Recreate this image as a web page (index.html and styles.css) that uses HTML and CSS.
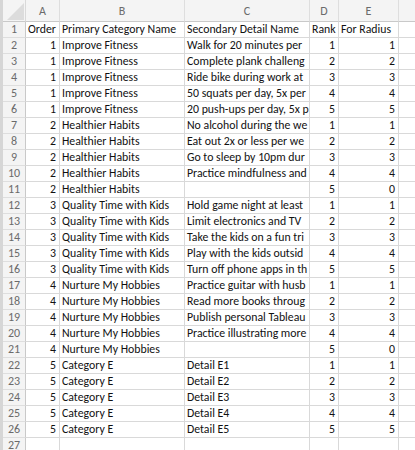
FILE: index.html
```html
<!DOCTYPE html>
<html>
<head>
<meta charset="utf-8">
<link rel="stylesheet" href="styles.css">
</head>
<body>
<div class="sheet">
  <div class="strip hdr-strip"></div>
  <div class="corner"><svg class="tri" width="20" height="20" viewBox="0 0 20 20"><polygon points="19,2 19,19 2,19" fill="#dcdcdc"/></svg></div>
  <div class="colh">A</div>
  <div class="colh">B</div>
  <div class="colh">C</div>
  <div class="colh">D</div>
  <div class="colh">E</div>
  <div class="colh last"></div>

  <div class="strip"></div><div class="rowh">1</div><div class="c">Order</div><div class="c">Primary Category Name</div><div class="c">Secondary Detail Name</div><div class="c">Rank</div><div class="c">For Radius</div><div class="c last"></div>
  <div class="strip"></div><div class="rowh">2</div><div class="c n">1</div><div class="c">Improve Fitness</div><div class="c">Walk for 20 minutes per</div><div class="c n">1</div><div class="c n">1</div><div class="c last"></div>
  <div class="strip"></div><div class="rowh">3</div><div class="c n">1</div><div class="c">Improve Fitness</div><div class="c">Complete plank challeng</div><div class="c n">2</div><div class="c n">2</div><div class="c last"></div>
  <div class="strip"></div><div class="rowh">4</div><div class="c n">1</div><div class="c">Improve Fitness</div><div class="c">Ride bike during work at</div><div class="c n">3</div><div class="c n">3</div><div class="c last"></div>
  <div class="strip"></div><div class="rowh">5</div><div class="c n">1</div><div class="c">Improve Fitness</div><div class="c">50 squats per day, 5x per</div><div class="c n">4</div><div class="c n">4</div><div class="c last"></div>
  <div class="strip"></div><div class="rowh">6</div><div class="c n">1</div><div class="c">Improve Fitness</div><div class="c">20 push-ups per day, 5x p</div><div class="c n">5</div><div class="c n">5</div><div class="c last"></div>
  <div class="strip"></div><div class="rowh">7</div><div class="c n">2</div><div class="c">Healthier Habits</div><div class="c">No alcohol during the we</div><div class="c n">1</div><div class="c n">1</div><div class="c last"></div>
  <div class="strip"></div><div class="rowh">8</div><div class="c n">2</div><div class="c">Healthier Habits</div><div class="c">Eat out 2x or less per we</div><div class="c n">2</div><div class="c n">2</div><div class="c last"></div>
  <div class="strip"></div><div class="rowh">9</div><div class="c n">2</div><div class="c">Healthier Habits</div><div class="c">Go to sleep by 10pm dur</div><div class="c n">3</div><div class="c n">3</div><div class="c last"></div>
  <div class="strip"></div><div class="rowh">10</div><div class="c n">2</div><div class="c">Healthier Habits</div><div class="c">Practice mindfulness and</div><div class="c n">4</div><div class="c n">4</div><div class="c last"></div>
  <div class="strip"></div><div class="rowh">11</div><div class="c n">2</div><div class="c">Healthier Habits</div><div class="c"></div><div class="c n">5</div><div class="c n">0</div><div class="c last"></div>
  <div class="strip"></div><div class="rowh">12</div><div class="c n">3</div><div class="c">Quality Time with Kids</div><div class="c">Hold game night at least</div><div class="c n">1</div><div class="c n">1</div><div class="c last"></div>
  <div class="strip"></div><div class="rowh">13</div><div class="c n">3</div><div class="c">Quality Time with Kids</div><div class="c">Limit electronics and TV</div><div class="c n">2</div><div class="c n">2</div><div class="c last"></div>
  <div class="strip"></div><div class="rowh">14</div><div class="c n">3</div><div class="c">Quality Time with Kids</div><div class="c">Take the kids on a fun tri</div><div class="c n">3</div><div class="c n">3</div><div class="c last"></div>
  <div class="strip"></div><div class="rowh">15</div><div class="c n">3</div><div class="c">Quality Time with Kids</div><div class="c">Play with the kids outsid</div><div class="c n">4</div><div class="c n">4</div><div class="c last"></div>
  <div class="strip"></div><div class="rowh">16</div><div class="c n">3</div><div class="c">Quality Time with Kids</div><div class="c">Turn off phone apps in th</div><div class="c n">5</div><div class="c n">5</div><div class="c last"></div>
  <div class="strip"></div><div class="rowh">17</div><div class="c n">4</div><div class="c">Nurture My Hobbies</div><div class="c">Practice guitar with husb</div><div class="c n">1</div><div class="c n">1</div><div class="c last"></div>
  <div class="strip"></div><div class="rowh">18</div><div class="c n">4</div><div class="c">Nurture My Hobbies</div><div class="c">Read more books throug</div><div class="c n">2</div><div class="c n">2</div><div class="c last"></div>
  <div class="strip"></div><div class="rowh">19</div><div class="c n">4</div><div class="c">Nurture My Hobbies</div><div class="c">Publish personal Tableau</div><div class="c n">3</div><div class="c n">3</div><div class="c last"></div>
  <div class="strip"></div><div class="rowh">20</div><div class="c n">4</div><div class="c">Nurture My Hobbies</div><div class="c">Practice illustrating more</div><div class="c n">4</div><div class="c n">4</div><div class="c last"></div>
  <div class="strip"></div><div class="rowh">21</div><div class="c n">4</div><div class="c">Nurture My Hobbies</div><div class="c"></div><div class="c n">5</div><div class="c n">0</div><div class="c last"></div>
  <div class="strip"></div><div class="rowh">22</div><div class="c n">5</div><div class="c">Category E</div><div class="c">Detail E1</div><div class="c n">1</div><div class="c n">1</div><div class="c last"></div>
  <div class="strip"></div><div class="rowh">23</div><div class="c n">5</div><div class="c">Category E</div><div class="c">Detail E2</div><div class="c n">2</div><div class="c n">2</div><div class="c last"></div>
  <div class="strip"></div><div class="rowh">24</div><div class="c n">5</div><div class="c">Category E</div><div class="c">Detail E3</div><div class="c n">3</div><div class="c n">3</div><div class="c last"></div>
  <div class="strip"></div><div class="rowh">25</div><div class="c n">5</div><div class="c">Category E</div><div class="c">Detail E4</div><div class="c n">4</div><div class="c n">4</div><div class="c last"></div>
  <div class="strip"></div><div class="rowh">26</div><div class="c n">5</div><div class="c">Category E</div><div class="c">Detail E5</div><div class="c n">5</div><div class="c n">5</div><div class="c last"></div>
  <div class="strip"></div><div class="rowh">27</div><div class="c"></div><div class="c"></div><div class="c"></div><div class="c"></div><div class="c"></div><div class="c last"></div>
</div>
</body>
</html>
```
FILE: styles.css
```css
html, body {
  margin: 0;
  padding: 0;
  background: #ffffff;
  overflow: hidden;
}
.sheet {
  display: grid;
  grid-template-columns: 3px 23px 34px 125px 125px 29px 60px 1fr;
  grid-template-rows: 22px;
  grid-auto-rows: 16px;
  width: 415px;
  font-family: Carlito, Lato, "Liberation Sans", sans-serif;
  font-size: 11.8px;
  color: #111111;
}
.strip {
  background: #d6d6d6;
}
.corner {
  background: #f4f4f4;
  border-right: 1px solid #d9d9d9;
  border-bottom: 1px solid #c9c9c9;
  box-sizing: border-box;
  display: flex;
  align-items: flex-end;
  justify-content: flex-end;
}
.tri {
  display: block;
}
.colh {
  background: #f4f4f4;
  border-right: 1px solid #dedede;
  border-bottom: 1px solid #c9c9c9;
  box-sizing: border-box;
  color: #6b6b6b;
  font-size: 12px;
  display: flex;
  align-items: center;
  justify-content: center;
  padding-top: 1px;
}
.rowh {
  background: #f4f4f4;
  border-right: 1px solid #c9c9c9;
  border-bottom: 1px solid #dedede;
  box-sizing: border-box;
  color: #6b6b6b;
  font-size: 12px;
  display: flex;
  align-items: center;
  justify-content: center;
  line-height: 15px;
}
.c {
  border-right: 1px solid #d9d9d9;
  border-bottom: 1px solid #d9d9d9;
  box-sizing: border-box;
  padding: 0 2px 0 2px;
  white-space: nowrap;
  overflow: hidden;
  line-height: 15px;
}
.n {
  text-align: right;
  padding-right: 3px;
}
.last {
  border-right: none;
}
```
